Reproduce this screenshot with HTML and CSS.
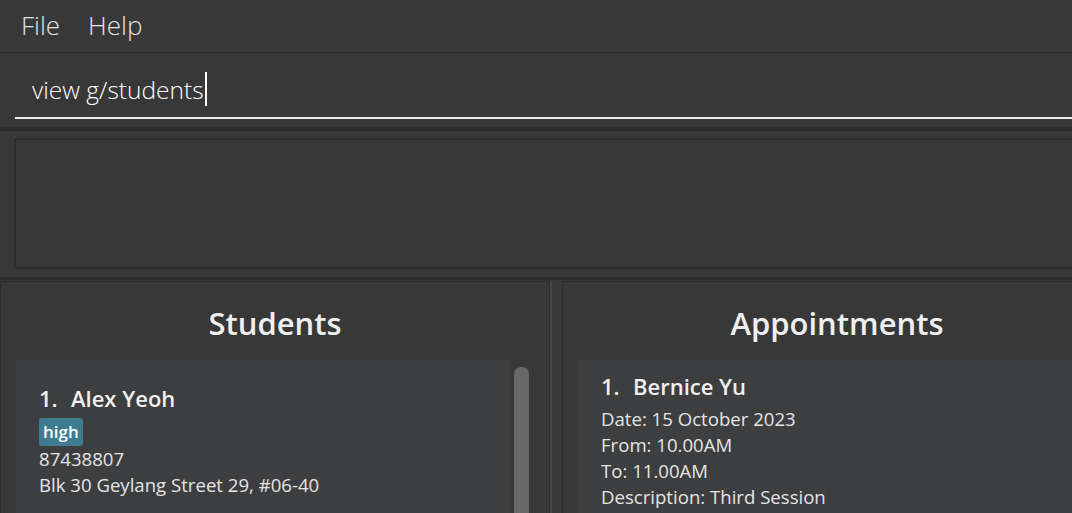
FILE: index.html
```html
<!DOCTYPE html>
<html lang="en">
<head>
<meta charset="utf-8">
<title>TutorConnect</title>
<link rel="stylesheet" href="styles.css">
</head>
<body>
<div class="window">
  <nav class="menubar">
    <span class="menu-item">File</span>
    <span class="menu-item">Help</span>
  </nav>
  <div class="command-pane">
    <div class="command-box"><span class="cmd-text">view g/students</span><span class="caret"></span></div>
  </div>
  <div class="hdivider"></div>
  <div class="result-pane">
    <div class="result-box"></div>
  </div>
  <div class="hdivider hdivider-double"></div>
  <div class="lists">
    <section class="panel">
      <h2 class="panel-title">Students</h2>
      <div class="list-area">
        <div class="list">
          <div class="card student-card">
            <div class="card-name"><span class="card-id">1.</span>Alex Yeoh</div>
            <div class="tags"><span class="tag">high</span></div>
            <div class="card-line">87438807</div>
            <div class="card-line">Blk 30 Geylang Street 29, #06-40</div>
          </div>
        </div>
        <div class="scrollbar"><div class="thumb"></div></div>
      </div>
    </section>
    <div class="vdivider"></div>
    <section class="panel panel-right">
      <h2 class="panel-title">Appointments</h2>
      <div class="list-area">
        <div class="list">
          <div class="card appt-card">
            <div class="card-name"><span class="card-id">1.</span>Bernice Yu</div>
            <div class="card-line">Date: 15 October 2023</div>
            <div class="card-line">From: 10.00AM</div>
            <div class="card-line">To: 11.00AM</div>
            <div class="card-line">Description: Third Session</div>
          </div>
        </div>
      </div>
    </section>
  </div>
</div>
</body>
</html>
```

FILE: styles.css
```css
html, body {
  margin: 0;
  padding: 0;
  background: #383838;
  overflow: hidden;
  height: 100%;
}

.window {
  width: 1112px;
  height: 513px;
  overflow: hidden;
  display: flex;
  flex-direction: column;
  background: #383838;
  font-family: "Open Sans", "Noto Sans", sans-serif;
  color: #e6e6e6;
}

.menubar {
  height: 52px;
  flex: none;
  display: flex;
  align-items: flex-start;
  gap: 28px;
  padding-left: 21px;
  border-bottom: 1px solid #2c2c2c;
}

.menu-item {
  font-size: 26px;
  font-weight: 300;
  line-height: 50px;
  color: #e2e2e2;
}

.command-pane {
  height: 74px;
  flex: none;
  padding: 0 0 0 15px;
  box-sizing: border-box;
}

.command-box {
  height: 66px;
  display: flex;
  align-items: center;
  padding: 8px 0 0 17px;
  box-sizing: border-box;
  border-bottom: 2px solid #e9e9e9;
}

.cmd-text {
  font-size: 24.5px;
  font-weight: 300;
  color: #ffffff;
}

.caret {
  width: 2px;
  height: 34px;
  background: #ffffff;
  margin-left: 1px;
}

.hdivider {
  height: 4px;
  flex: none;
  background: linear-gradient(#2e2e2e, #2a2a2a);
}

.hdivider-double {
  height: 3px;
}

.result-pane {
  height: 146px;
  flex: none;
  padding: 7px 0 8px 14px;
  box-sizing: border-box;
}

.result-box {
  height: 100%;
  border: 2px solid #2d2d2d;
  border-right: none;
  box-sizing: border-box;
  background: #383838;
}

.lists {
  flex: 1;
  display: flex;
  padding-top: 1px;
  min-height: 0;
  overflow: hidden;
}

.panel {
  width: 550px;
  flex: none;
  border: 1px solid #2c2c2c;
  border-bottom: none;
  box-sizing: border-box;
  display: flex;
  flex-direction: column;
}

.panel-right {
  flex: 1;
}

.vdivider {
  width: 12px;
  flex: none;
  border-left: 2px solid #474747;
  box-sizing: border-box;
}

.panel-title {
  margin: 0;
  height: 78px;
  flex: none;
  text-align: center;
  font-size: 31px;
  font-weight: 600;
  line-height: 82px;
  color: #efefef;
}

.list-area {
  flex: 1;
  display: flex;
  padding-left: 15px;
  min-height: 0;
}

.list {
  flex: 1;
}

.panel:first-child .list {
  flex: none;
  width: 494px;
}

.card {
  background: #3c3e3f;
  padding-left: 23px;
  height: 200px;
  box-sizing: border-box;
}

.student-card {
  padding-top: 23px;
}

.appt-card {
  padding-top: 11px;
}

.card-name {
  font-size: 22px;
  font-weight: 600;
  line-height: 30px;
  color: #f0f0f0;
  margin-bottom: 5px;
}

.card-id {
  display: inline-block;
  width: 32px;
}

.tags {
  display: flex;
  height: 28px;
}

.tag {
  background: #3e7b91;
  color: #ffffff;
  font-size: 17px;
  font-weight: 600;
  line-height: 28px;
  padding: 0 4px;
  border-radius: 3px;
}

.card-line {
  font-size: 18.6px;
  line-height: 26px;
  color: #e4e4e4;
}

.scrollbar {
  width: 15px;
  margin-left: 4px;
  padding-top: 7px;
}

.thumb {
  height: 200px;
  background: #686868;
  border-radius: 7px;
}
```
